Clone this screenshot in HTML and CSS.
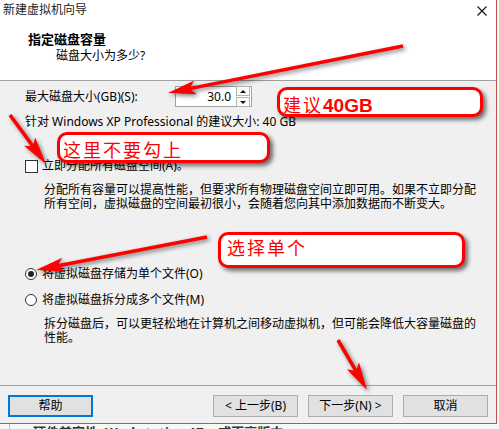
FILE: index.html
```html
<!DOCTYPE html>
<html>
<head>
    <meta charset="utf-8">
    <link rel="stylesheet" href="styles.css">
</head>
<body>
    <div class="dialog">
        <div class="titlebar">
            <span class="title">新建虚拟机向导</span>
            <svg class="close" width="10" height="10" viewBox="0 0 10 10">
                <path d="M0.5 0.5 L9.5 9.5 M9.5 0.5 L0.5 9.5" stroke="#111" stroke-width="1.1" fill="none"/>
            </svg>
        </div>

        <div class="header">
            <div class="heading">指定磁盘容量</div>
            <div class="subheading">磁盘大小为多少?</div>
        </div>

        <div class="content">
            <div class="size-row">
                <label class="size-label">最大磁盘大小(GB)(S):</label>
                <div class="spin">
                    <span class="spin-value">30.0</span>
                    <span class="spin-btns">
                        <span class="spin-btn"><i class="tri up"></i></span>
                        <span class="spin-btn"><i class="tri down"></i></span>
                    </span>
                </div>
            </div>

            <div class="hint">针对 Windows XP Professional 的建议大小: 40 GB</div>

            <div class="option option-check"><span class="checkbox"></span>立即分配所有磁盘空间(A)。</div>
            <p class="desc">分配所有容量可以提高性能，但要求所有物理磁盘空间立即可用。如果不立即分配<br>所有空间，虚拟磁盘的空间最初很小，会随着您向其中添加数据而不断变大。</p>

            <div class="option option-single"><span class="radio checked"></span>将虚拟磁盘存储为单个文件(O)</div>
            <div class="option option-split"><span class="radio"></span>将虚拟磁盘拆分成多个文件(M)</div>
            <p class="desc">拆分磁盘后，可以更轻松地在计算机之间移动虚拟机，但可能会降低大容量磁盘的<br>性能。</p>
        </div>

        <div class="footer">
            <button class="btn btn-focus">帮助</button>
            <div class="nav">
                <button class="btn">&lt; 上一步(B)</button>
                <button class="btn">下一步(N) &gt;</button>
                <button class="btn">取消</button>
            </div>
        </div>
    </div>

    <div class="behind">硬件兼容性: Workstation 17.x 或更高版本</div>

    <!-- red annotations drawn over the screenshot -->
    <svg class="arrows" width="499" height="429" viewBox="0 0 499 429">
        <defs>
            <marker id="head" markerUnits="userSpaceOnUse" markerWidth="28" markerHeight="14" refX="20" refY="7" orient="auto">
                <path d="M0 0 L28 7 L0 14 L6 7 Z" fill="#ff0000"/>
            </marker>
        </defs>
        <g stroke="#ff0000" stroke-width="3.5" fill="none" marker-end="url(#head)">
            <line x1="403" y1="46" x2="175.8" y2="91.4"/>
            <line x1="10" y1="115" x2="41.3" y2="157.6"/>
            <line x1="207" y1="237" x2="43.9" y2="268.5"/>
            <line x1="338" y1="340" x2="363" y2="383.1"/>
        </g>
    </svg>

    <div class="callout callout-size">建议<b>40GB</b></div>
    <div class="callout callout-check">这里不要勾上</div>
    <div class="callout callout-single">选择单个</div>
</body>
</html>
```

FILE: styles.css
```css
body {
    margin: 0;
    width: 499px;
    height: 429px;
    overflow: hidden;
    position: relative;
    background-color: #f7f7f7;
    font-family: 'Noto Sans', 'Noto Sans CJK SC', sans-serif;
    font-size: 12px;
    color: #000;
}
.dialog {
    width: 497px;
    height: 424px;
    box-sizing: border-box;
    display: flex;
    flex-direction: column;
    background-color: #f0f0f0;
    border-right: 1px solid #b9584f;
    border-bottom: 1px solid #b9584f;
}
.titlebar {
    height: 24px;
    display: flex;
    justify-content: space-between;
    align-items: flex-start;
    background-color: #fff;
    padding: 0 9px 0 3px;
}
.title {
    line-height: 20px;
    color: #222;
}
.close {
    margin-top: 6px;
}
.header {
    height: 57px;
    box-sizing: border-box;
    background-color: #fff;
    border-bottom: 1px solid #a0a0a0;
    padding: 6px 0 0 28px;
}
.heading {
    font-weight: 700;
    font-size: 13px;
    line-height: 18px;
}
.subheading {
    margin-left: 28px;
    line-height: 16px;
}
.content {
    flex-grow: 1;
    padding-left: 25px;
}
.size-row {
    margin-top: 5px;
    height: 21px;
    display: flex;
    align-items: center;
}
.size-label {
    width: 150px;
    line-height: 16px;
}
.spin {
    width: 77px;
    height: 21px;
    box-sizing: border-box;
    border: 1px solid #a3a3a3;
    background-color: #fff;
    display: flex;
    align-items: center;
}
.spin-value {
    flex-grow: 1;
    text-align: right;
    padding-right: 5px;
    line-height: 16px;
}
.spin-btns {
    display: flex;
    flex-direction: column;
    gap: 1px;
    margin-right: 1px;
}
.spin-btn {
    width: 12px;
    height: 8px;
    border: 1px solid #b5b5b5;
    background-color: #fafafa;
    display: flex;
    align-items: center;
    justify-content: center;
}
.tri {
    width: 0;
    height: 0;
    border-left: 3px solid transparent;
    border-right: 3px solid transparent;
}
.tri.up { border-bottom: 3px solid #111; }
.tri.down { border-top: 3px solid #111; }
.hint {
    margin-top: 7px;
    line-height: 16px;
}
.option {
    display: flex;
    align-items: center;
    line-height: 16px;
}
.option-check { margin-top: 28px; }
.option-single { margin-top: 55px; }
.option-split { margin-top: 10px; }
.checkbox {
    width: 13px;
    height: 13px;
    box-sizing: border-box;
    border: 1px solid #333;
    background-color: #fff;
    margin-right: 4px;
}
.radio {
    width: 12px;
    height: 12px;
    box-sizing: border-box;
    border: 1px solid #333;
    border-radius: 50%;
    background-color: #fff;
    margin-right: 5px;
    display: flex;
    align-items: center;
    justify-content: center;
}
.radio.checked::after {
    content: '';
    width: 6px;
    height: 6px;
    border-radius: 50%;
    background-color: #222;
}
.desc {
    margin: 9px 0 0 19px;
    line-height: 14px;
}
.footer {
    height: 38px;
    box-sizing: border-box;
    border-top: 1px solid #a0a0a0;
    padding: 9px 8px 0 8px;
    display: flex;
    justify-content: space-between;
    align-items: flex-start;
}
.nav {
    display: flex;
    gap: 10px;
}
.btn {
    width: 85px;
    height: 22px;
    box-sizing: border-box;
    background-color: #e1e1e1;
    border: 1px solid #adadad;
    font-family: inherit;
    font-size: 12px;
    color: #000;
    padding: 0;
    line-height: 16px;
}
.btn-focus {
    border: 2px solid #0078d7;
}
.behind {
    height: 5px;
    overflow: hidden;
    margin-left: 9px;
    padding-left: 23px;
    border-left: 1px solid #bdbdbd;
    line-height: 16px;
    font-size: 13px;
    font-weight: 700;
    color: #333;
}

/* annotations */
.arrows {
    position: absolute;
    left: 0;
    top: 0;
    pointer-events: none;
    filter: drop-shadow(2px 2px 2px rgba(0, 0, 0, 0.5));
}
.callout {
    position: absolute;
    box-sizing: border-box;
    background-color: #fff;
    border: 3px solid #ff0000;
    border-radius: 10px;
    box-shadow: 3px 3px 4px rgba(0, 0, 0, 0.55);
    color: #ff0000;
    font-family: 'Noto Sans CJK SC', sans-serif;
    font-size: 18px;
    letter-spacing: 2px;
    line-height: 24px;
    padding: 2px 0 0 3px;
}
.callout b {
    font-family: 'Liberation Sans', sans-serif;
    font-size: 19px;
    letter-spacing: 0;
}
.callout-size {
    left: 277px;
    top: 87px;
    width: 206px;
    height: 30px;
}
.callout-check {
    left: 57px;
    top: 132px;
    width: 213px;
    height: 31px;
}
.callout-single {
    left: 218px;
    top: 232px;
    width: 247px;
    height: 36px;
    padding: 0 0 0 6px;
}
```
